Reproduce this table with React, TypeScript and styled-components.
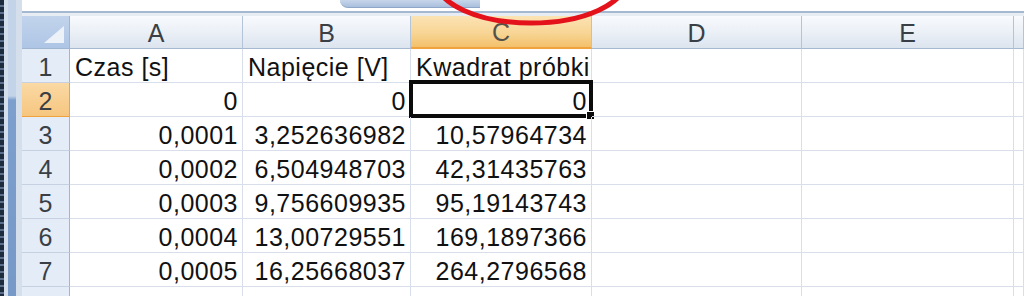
import React from "react";
import styled, { createGlobalStyle, css } from "styled-components";

const GlobalStyle = createGlobalStyle`
  html, body {
    margin: 0;
    padding: 0;
    background: #ffffff;
  }
  body {
    font-family: "Liberation Sans", Arial, sans-serif;
    overflow: hidden;
  }
`;

const Window = styled.div`
  position: relative;
  display: flex;
  width: 1024px;
  height: 296px;
  overflow: hidden;
  background: #ffffff;
`;

// left frame of the excel window
const Frame = styled.div`
  display: flex;
  width: 22px;
  flex-shrink: 0;
`;

const FrameEdge = styled.div`
  width: 4px;
  background: repeating-linear-gradient(
    180deg,
    #1d2b3f 0px,
    #1d2b3f 5px,
    #5a6f8c 5px,
    #5a6f8c 7px
  );
`;

const FrameGap = styled.div<{ $w: number }>`
  width: ${(p) => p.$w}px;
  background: #d5dfeb;
`;

const FrameBar = styled.div`
  width: 8px;
  background: linear-gradient(180deg, #c3d3e8 0px, #c3d3e8 96px, #7d9fcd 100px, #7799c8 100%);
`;

const Sheet = styled.div`
  flex: 1;
  display: flex;
  flex-direction: column;
  min-width: 0;
`;

const TabStrip = styled.div`
  flex-shrink: 0;
  height: 11px;
  display: flex;
  background: #ffffff;
  border-bottom: 2px solid #a4b8d2;
`;

const TabSpacer = styled.div`
  width: 318px;
`;

const Tab = styled.div`
  width: 140px;
  height: 7px;
  border-bottom-left-radius: 14px;
  background: linear-gradient(180deg, #c7d6ea, #a9bfdd);
  border-bottom: 1px solid #8ea7c8;
`;

const TabGap = styled.div`
  flex-shrink: 0;
  height: 3px;
  background: #e8edf4;
`;

const Grid = styled.div`
  flex-shrink: 0;
  display: grid;
  grid-template-columns: 48px 173px 168px 181px 210px 212px 1fr;
  grid-auto-rows: 34px;
  grid-template-rows: 33px;
`;

const Corner = styled.div`
  box-sizing: border-box;
  background: linear-gradient(180deg, #c2d4ec, #aec5e5);
  border-right: 1px solid #9fb5d0;
  border-bottom: 1px solid #9fb5d0;
  display: flex;
  justify-content: flex-end;
  align-items: flex-end;
  padding: 0 5px 5px 0;
`;

const CornerMark = styled.div`
  width: 0;
  height: 0;
  border-left: 20px solid transparent;
  border-bottom: 17px solid #edf2f9;
`;

const ColHead = styled.div<{ $active?: boolean }>`
  box-sizing: border-box;
  display: flex;
  align-items: center;
  justify-content: center;
  font-size: 25px;
  color: #3a3f46;
  background: linear-gradient(180deg, #f8fafd 0%, #eaeff6 55%, #dce4ef 100%);
  border-right: 1px solid #b4c4d8;
  border-bottom: 1px solid #a6b9d0;
  padding-top: 2px;
  ${(p) =>
    p.$active &&
    css`
      background: linear-gradient(180deg, #fbe3b4 0%, #f8d595 55%, #f3c16a 100%);
      border-bottom: 2px solid #f0a33c;
      color: #55524a;
    `}
`;

const RowHead = styled.div<{ $active?: boolean }>`
  box-sizing: border-box;
  display: flex;
  align-items: center;
  justify-content: center;
  font-size: 25px;
  color: #3a3f46;
  background: #e4ecf7;
  border-right: 1px solid #9fb5d0;
  border-bottom: 1px solid #c5d1e0;
  padding-top: 3px;
  ${(p) =>
    p.$active &&
    css`
      background: linear-gradient(180deg, #fad9a4, #f6c680);
      border-right: 1px solid #f0a33c;
      border-bottom: 1px solid #f0a33c;
    `}
`;

const Cell = styled.div<{ $right?: boolean }>`
  position: relative;
  box-sizing: border-box;
  display: flex;
  align-items: center;
  justify-content: ${(p) => (p.$right ? "flex-end" : "flex-start")};
  padding: 4px 4px 0 5px;
  font-size: 25px;
  letter-spacing: 0.5px;
  color: #111111;
  white-space: nowrap;
  border-right: 1px solid #d9dfea;
  border-bottom: 1px solid #d9dfea;
`;

const Selection = styled.div`
  position: absolute;
  top: -3px;
  left: -2px;
  right: -2px;
  bottom: -2px;
  border: 4px solid #0b0b0b;
  pointer-events: none;
`;

const FillHandle = styled.div`
  position: absolute;
  right: -6px;
  bottom: -6px;
  width: 7px;
  height: 7px;
  background: #0b0b0b;
  border: 1px solid #ffffff;
`;

const Annotation = styled.svg`
  position: absolute;
  left: 0;
  top: 0;
  pointer-events: none;
`;

const columns = ["A", "B", "C", "D", "E", ""];

const rows: string[][] = [
  ["Czas [s]", "Napięcie [V]", "Kwadrat próbki"],
  ["0", "0", "0"],
  ["0,0001", "3,252636982", "10,57964734"],
  ["0,0002", "6,504948703", "42,31435763"],
  ["0,0003", "9,756609935", "95,19143743"],
  ["0,0004", "13,00729551", "169,1897366"],
  ["0,0005", "16,25668037", "264,2796568"],
  ["", "", ""],
];

export default function App() {
  return (
    <>
      <GlobalStyle />
      <Window>
        <Frame>
          <FrameEdge />
          <FrameGap $w={4} />
          <FrameBar />
          <FrameGap $w={6} />
        </Frame>
        <Sheet>
          <TabStrip>
            <TabSpacer />
            <Tab />
          </TabStrip>
          <TabGap />
          <Grid>
            <Corner>
              <CornerMark />
            </Corner>
            {columns.map((c, i) => (
              <ColHead key={i} $active={c === "C"}>
                {c}
              </ColHead>
            ))}
            {rows.map((r, ri) => (
              <React.Fragment key={ri}>
                <RowHead $active={ri === 1}>{ri < 7 ? ri + 1 : ""}</RowHead>
                {r.map((v, ci) => {
                  const isNum = ri > 0;
                  const selected = ri === 1 && ci === 2;
                  return (
                    <Cell key={ci} $right={isNum}>
                      {v}
                      {selected && (
                        <Selection>
                          <FillHandle />
                        </Selection>
                      )}
                    </Cell>
                  );
                })}
                <Cell />
                <Cell />
                <Cell />
              </React.Fragment>
            ))}
          </Grid>
        </Sheet>
        <Annotation width="1024" height="40" viewBox="0 0 1024 40">
          <ellipse
            cx="531"
            cy="-20"
            rx="95"
            ry="43"
            fill="none"
            stroke="#e3121b"
            strokeWidth="5"
          />
        </Annotation>
      </Window>
    </>
  );
}
